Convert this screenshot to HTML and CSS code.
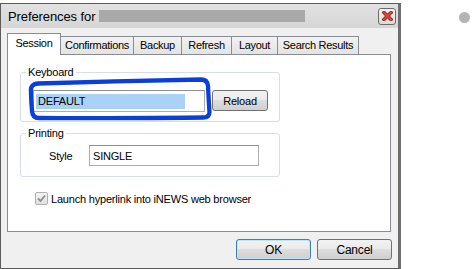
FILE: index.html
```html
<!DOCTYPE html>
<html>
<head>
  <link rel="stylesheet" href="styles.css">
</head>
<body>
  <div class="window">
    <div class="titlebar">
      <span class="title-text">Preferences for</span>
      <span class="redacted"></span>
      <button class="close-btn" aria-label="Close">
        <svg width="11" height="10" viewBox="0 0 11 10">
          <path d="M2 1.5 L9 8.5 M9 1.5 L2 8.5" stroke="#8e1f17" stroke-width="3.4" stroke-linecap="square"/>
          <path d="M2 1.5 L9 8.5 M9 1.5 L2 8.5" stroke="#d8453a" stroke-width="2" stroke-linecap="square"/>
        </svg>
      </button>
    </div>

    <div class="client">
      <div class="tabs">
        <div class="tab tab-active w-session">Session</div>
        <div class="tab w-confirm">Confirmations</div>
        <div class="tab w-backup">Backup</div>
        <div class="tab w-refresh">Refresh</div>
        <div class="tab w-layout">Layout</div>
        <div class="tab w-search">Search Results</div>
      </div>

      <div class="panel">
        <fieldset class="group">
          <legend>Keyboard</legend>
          <div class="group-row kb-row">
            <div class="kb-field">
              <div class="textbox kb-box"><span class="selected">DEFAULT</span></div>
              <!-- hand-drawn marker round the keyboard box -->
              <svg class="scribble" width="190" height="48" viewBox="25 76 190 48">
                <path d="M31 92 Q 30 84 38 83.5 C 90 82, 150 80.5, 201 79.5 Q 207.5 79.5 208 86 C 208.5 96, 209 106, 209.5 112 Q 209.5 117.5 203 117.5 C 150 118, 90 118.5, 39 118 Q 32.5 118 32 111 C 31.5 104, 31 98, 31 92 Z"
                      fill="none" stroke="#0a3fd8" stroke-width="4.3" stroke-linejoin="round"/>
              </svg>
            </div>
            <button class="btn reload-btn">Reload</button>
          </div>
        </fieldset>

        <fieldset class="group group-print">
          <legend>Printing</legend>
          <div class="group-row print-row">
            <span class="field-label">Style</span>
            <div class="textbox style-box">SINGLE</div>
          </div>
        </fieldset>

        <label class="check-row">
          <span class="checkbox">
            <svg width="9" height="9" viewBox="0 0 9 9">
              <path d="M1 4.5 L3.5 7 L8 1.5" fill="none" stroke="#8d8d8d" stroke-width="1.8"/>
            </svg>
          </span>
          Launch hyperlink into iNEWS web browser
        </label>
      </div>

      <div class="footer">
        <button class="btn dlg-btn btn-default">OK</button>
        <button class="btn dlg-btn">Cancel</button>
      </div>
    </div>
  </div>

  <div class="dot"></div>
</body>
</html>
```

FILE: styles.css
```css
body {
  margin: 0;
  display: flex;
  align-items: flex-start;
  background-color: #ffffff;
  font-family: "Liberation Sans", Arial, sans-serif;
  font-size: 11px;
  color: #000000;
}

.window {
  width: 401px;
  height: 266px;
  margin-top: 3px;
  box-sizing: border-box;
  border: 1px solid #5c5c5c;
  border-right: 3px solid #6e6e6e;
  background-color: #f0f0f0;
  display: flex;
  flex-direction: column;
}

.titlebar {
  height: 24px;
  flex-shrink: 0;
  display: flex;
  align-items: center;
  padding: 0 2px 0 7px;
  background: linear-gradient(#e2e2e2, #d6d6d6);
}

.title-text {
  font-size: 13px;
  letter-spacing: -0.1px;
}

.redacted {
  width: 206px;
  height: 12px;
  margin-left: 4px;
  background-color: #a9a9a9;
}

.close-btn {
  margin-left: auto;
  width: 18px;
  height: 17px;
  padding: 0;
  border: 1px solid #6c6c6c;
  border-radius: 3px;
  background: linear-gradient(#f3f3f3, #d9d9d9);
  display: flex;
  align-items: center;
  justify-content: center;
}

.client {
  flex: 1;
  padding: 5px 7px 0 6px;
  display: flex;
  flex-direction: column;
}

.tabs {
  height: 21px;
  display: flex;
  align-items: flex-end;
  position: relative;
  z-index: 1;
}

.tab {
  height: 18px;
  box-sizing: border-box;
  border: 1px solid #898c95;
  border-bottom: none;
  margin-left: -1px;
  background: linear-gradient(#f2f2f2, #e3e3e3);
  display: flex;
  align-items: center;
  justify-content: center;
  letter-spacing: -0.3px;
  padding-bottom: 1px;
}

.tab-active {
  height: 22px;
  margin-left: 0;
  margin-bottom: -1px;
  background: #ffffff;
  padding-bottom: 3px;
  position: relative;
}

.w-session { width: 54px; }
.w-confirm { width: 74px; }
.w-backup { width: 49px; }
.w-refresh { width: 51px; }
.w-layout { width: 47px; }
.w-search { width: 82px; }

.panel {
  height: 178px;
  box-sizing: border-box;
  border: 1px solid #898c95;
  background-color: #ffffff;
  padding: 11px 0 0 12px;
}

.group {
  width: 260px;
  box-sizing: border-box;
  margin: 0;
  padding: 0;
  border: 1px solid #d5dfe5;
  border-radius: 3px;
}

.group legend {
  margin-left: 5px;
  padding: 0 2px;
  line-height: 13px;
  letter-spacing: -0.2px;
}

.group-print {
  margin-top: 5px;
}

.group-row {
  display: flex;
  align-items: flex-start;
}

.kb-row {
  padding: 11px 0 9px 12px;
  gap: 7px;
}

.kb-field {
  position: relative;
}

.textbox {
  box-sizing: border-box;
  border: 1px solid #abadb3;
  border-top-color: #8e8f8f;
  background-color: #ffffff;
  display: flex;
  align-items: center;
  letter-spacing: -0.2px;
}

.kb-box {
  width: 172px;
  height: 22px;
  padding-left: 2px;
}

.selected {
  width: 147px;
  height: 15px;
  line-height: 15px;
  padding-left: 2px;
  background-color: #a9d2f6;
}

.scribble {
  position: absolute;
  left: -8px;
  top: -14px;
}

.btn {
  font-family: inherit;
  font-size: 11px;
  color: #000000;
  border: 1px solid #707070;
  border-radius: 3px;
  background: linear-gradient(#f2f2f2 0%, #ebebeb 45%, #dddddd 50%, #cfcfcf 100%);
  padding: 0;
  letter-spacing: -0.2px;
}

.reload-btn {
  width: 56px;
  height: 21px;
}

.print-row {
  padding: 5px 0 10px 28px;
  align-items: center;
}

.field-label {
  width: 40px;
  letter-spacing: -0.2px;
}

.style-box {
  width: 170px;
  height: 21px;
  padding-left: 3px;
}

.check-row {
  display: flex;
  align-items: center;
  gap: 3px;
  margin: 15px 0 0 15px;
  letter-spacing: -0.2px;
}

.checkbox {
  width: 13px;
  height: 13px;
  box-sizing: border-box;
  border: 1px solid #b1b1b1;
  border-radius: 2px;
  background: linear-gradient(#f4f4f4, #e0e0e0);
  display: flex;
  align-items: center;
  justify-content: center;
}

.footer {
  display: flex;
  justify-content: flex-end;
  gap: 6px;
  margin-top: 7px;
  margin-right: -1px;
}

.dlg-btn {
  width: 75px;
  height: 21px;
  font-size: 12px;
}

.btn-default {
  border-color: #3c7fb1;
  box-shadow: inset 0 0 0 1px #bfe3f7;
}

.dot {
  width: 11px;
  height: 11px;
  margin: 12px 0 0 58px;
  border-radius: 50%;
  background-color: #b4b4b4;
}
```
